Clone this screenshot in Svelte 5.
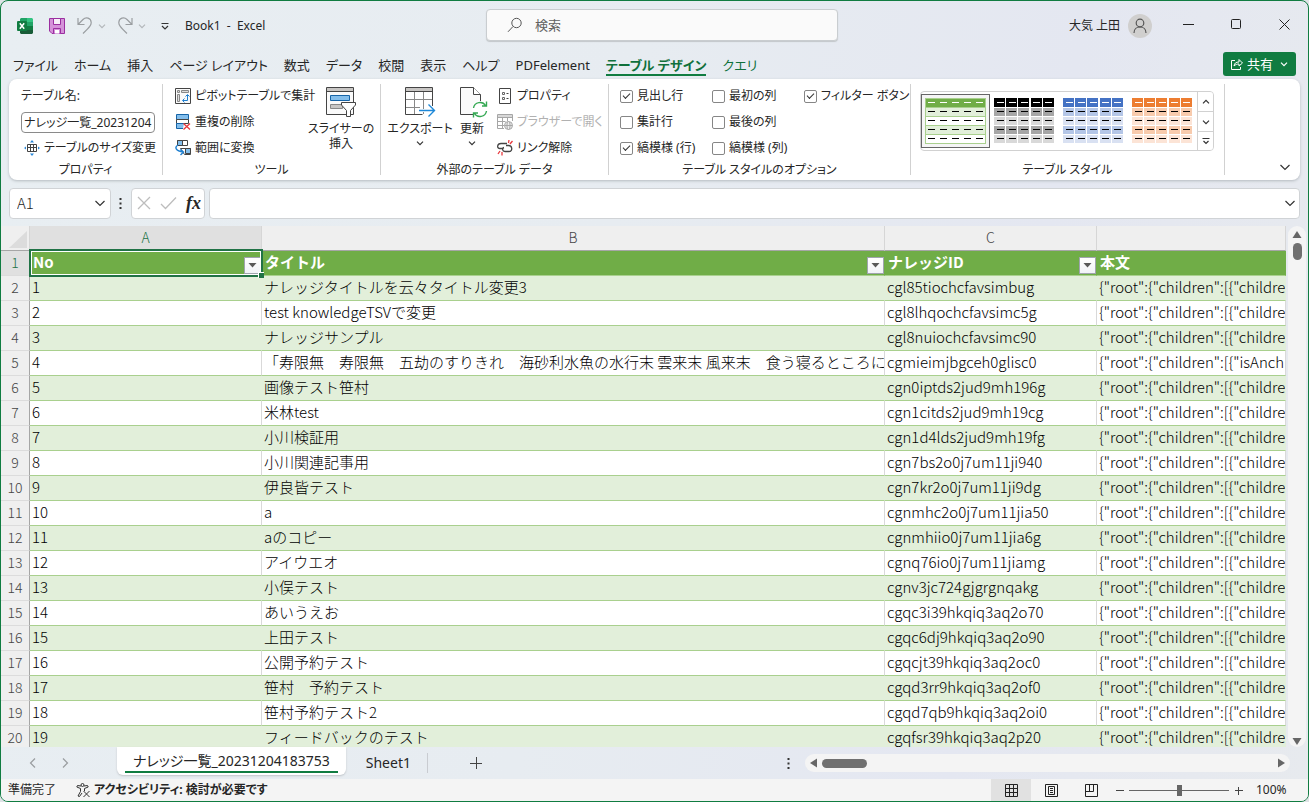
<script lang="ts">
	type Row = { title: string; id: string; body: string };

	const children = '{"root":{"children":[{"childre';
	const anchor = '{"root":{"children":[{"isAnch';

	const menu = [
		'ファイル',
		'ホーム',
		'挿入',
		'ページ レイアウト',
		'数式',
		'データ',
		'校閲',
		'表示',
		'ヘルプ',
		'PDFelement',
		'テーブル デザイン',
		'クエリ'
	];

	const rows: Row[] = [
		{ title: 'ナレッジタイトルを云々タイトル変更3', id: 'cgl85tiochcfavsimbug', body: children },
		{ title: 'test knowledgeTSVで変更', id: 'cgl8lhqochcfavsimc5g', body: children },
		{ title: 'ナレッジサンプル', id: 'cgl8nuiochcfavsimc90', body: children },
		{
			title: '「寿限無　寿限無　五劫のすりきれ　海砂利水魚の水行末 雲来末 風来末　食う寝るところに',
			id: 'cgmieimjbgceh0glisc0',
			body: anchor
		},
		{ title: '画像テスト笹村', id: 'cgn0iptds2jud9mh196g', body: children },
		{ title: '米林test', id: 'cgn1citds2jud9mh19cg', body: children },
		{ title: '小川検証用', id: 'cgn1d4lds2jud9mh19fg', body: children },
		{ title: '小川関連記事用', id: 'cgn7bs2o0j7um11ji940', body: children },
		{ title: '伊良皆テスト', id: 'cgn7kr2o0j7um11ji9dg', body: children },
		{ title: 'a', id: 'cgnmhc2o0j7um11jia50', body: children },
		{ title: 'aのコピー', id: 'cgnmhiio0j7um11jia6g', body: children },
		{ title: 'アイウエオ', id: 'cgnq76io0j7um11jiamg', body: children },
		{ title: '小俣テスト', id: 'cgnv3jc724gjgrgnqakg', body: children },
		{ title: 'あいうえお', id: 'cgqc3i39hkqiq3aq2o70', body: children },
		{ title: '上田テスト', id: 'cgqc6dj9hkqiq3aq2o90', body: children },
		{ title: '公開予約テスト', id: 'cgqcjt39hkqiq3aq2oc0', body: children },
		{ title: '笹村　予約テスト', id: 'cgqd3rr9hkqiq3aq2of0', body: children },
		{ title: '笹村予約テスト2', id: 'cgqd7qb9hkqiq3aq2oi0', body: children },
		{ title: 'フィードバックのテスト', id: 'cgqfsr39hkqiq3aq2p20', body: children }
	];

	const themes = [
		{ head: '#70ad47', odd: '#e2efda', even: '#ffffff', line: '#a9d08e' },
		{ head: '#000000', odd: '#a6a6a6', even: '#d9d9d9', line: '' },
		{ head: '#4472c4', odd: '#b4c6e7', even: '#d9e1f2', line: '' },
		{ head: '#ed7d31', odd: '#f8cbad', even: '#fce4d6', line: '' }
	];

	let activeMenu = $state('テーブル デザイン');
	let activeTheme = $state(0);
	let tableName = $state('ナレッジ一覧_20231204183753');
	let cellRef = $state('A1');
	let formula = $state('');
	let search = $state('');
	let zoom = $state(100);

	let options = $state([
		{ label: '見出し行', checked: true },
		{ label: '最初の列', checked: false },
		{ label: 'フィルター ボタン', checked: true },
		{ label: '集計行', checked: false },
		{ label: '最後の列', checked: false },
		{ label: '', checked: false },
		{ label: '縞模様 (行)', checked: true },
		{ label: '縞模様 (列)', checked: false }
	]);
</script>

{#snippet chevron(size: number)}
	<svg class="chevron" width={size} height={size} viewBox="0 0 12 12">
		<path d="M1.5 4 6 8.5 10.5 4" />
	</svg>
{/snippet}

{#snippet filterButton(name: string)}
	<button class="filter" aria-label="{name} フィルター">
		<svg width="9" height="5" viewBox="0 0 9 5"><path d="M0.5 0h8L4.5 4.5z" fill="#595959" /></svg>
	</button>
{/snippet}

<div class="window">
	<header class="titlebar">
		<div class="quick">
			<svg class="logo" width="16" height="16" viewBox="0 0 16 16">
				<path d="M4 0h6v4H3V1z" fill="#21a366" />
				<path d="M10 0h5l1 1v3h-6z" fill="#33c481" />
				<path d="M3 4h7v4H3z" fill="#107c41" />
				<path d="M10 4h6v4h-6z" fill="#21a366" />
				<path d="M3 8h7v4H3z" fill="#185c37" />
				<path d="M10 8h6v4h-6z" fill="#107c41" />
				<path d="M3 12h13v3l-1 1H4l-1-1z" fill="#185c37" />
				<rect y="3" width="10" height="10" rx="1" fill="#107c41" />
				<path d="m2.8 5.2 4.4 5.6M7.2 5.2l-4.4 5.6" stroke="#fff" stroke-width="1.5" />
			</svg>
			<button class="plain" aria-label="上書き保存">
				<svg width="16" height="16" viewBox="0 0 16 16">
					<path d="M.5.5h15v15H3L.5 13z" fill="#d592d9" stroke="#9b2fa0" />
					<path d="M4.5.5h7v6h-7z" fill="#f7f0f8" stroke="#9b2fa0" />
					<path d="M4.5 15.5v-5h7v5" fill="#d592d9" stroke="#9b2fa0" />
					<path d="M6 12h4v3.5H6z" fill="#fff" />
				</svg>
			</button>
			<div class="history">
				<button class="plain" aria-label="元に戻す">
					<svg width="16" height="18" viewBox="0 0 16 18">
						<path class="faded" d="M1 1v6.500h6.500M1.500 7 6 2.500C9-.5 14 1 14.200 5.500 14.300 8 13 9.500 6 16.500" />
					</svg>
				</button>
				<span class="mini faint">{@render chevron(8)}</span>
			</div>
			<div class="history">
				<button class="plain" aria-label="やり直し">
					<svg width="16" height="18" viewBox="0 0 16 18">
						<path class="faded" d="M15 1v6.500H8.500M14.500 7 10 2.500C7-.5 2 1 1.800 5.500 1.700 8 3 9.500 10 16.500" />
					</svg>
				</button>
				<span class="mini faint">{@render chevron(8)}</span>
			</div>
			<button class="plain" aria-label="クイック アクセス ツール バーのカスタマイズ">
				<svg width="8" height="7" viewBox="0 0 8 7">
					<path d="M.5.5h7M1 3l3 3 3-3" fill="none" stroke="#333" stroke-width="1.2" />
				</svg>
			</button>
			<span class="book">Book1&nbsp; -&nbsp; Excel</span>
		</div>
		<label class="search">
			<svg width="16" height="16" viewBox="0 0 16 16">
				<circle cx="9.500" cy="6" r="4.700" />
				<path d="M6 9.500 1 14.800" />
			</svg>
			<input type="text" placeholder="検索" aria-label="検索" bind:value={search} />
		</label>
		<div class="account">
			<span>大気 上田</span>
			<svg class="avatar" width="24" height="24" viewBox="0 0 24 24">
				<circle cx="12" cy="12" r="12" fill="#d0cfce" />
				<circle cx="12" cy="9" r="3.800" fill="none" stroke="#555" stroke-width="1.2" />
				<path d="M6 19c0-8 12-8 12 0" fill="none" stroke="#555" stroke-width="1.2" />
			</svg>
			<button class="caption" aria-label="最小化">
				<svg width="11" height="11" viewBox="0 0 11 11"><path d="M0 5.500h11" /></svg>
			</button>
			<button class="caption" aria-label="最大化">
				<svg width="11" height="11" viewBox="0 0 11 11">
					<rect x=".5" y=".5" width="9" height="9" rx="1" />
				</svg>
			</button>
			<button class="caption" aria-label="閉じる">
				<svg width="11" height="11" viewBox="0 0 11 11"><path d="m.5.5 10 10M10.500.5l-10 10" /></svg>
			</button>
		</div>
	</header>

	<nav class="menu">
		{#each menu as item}
			<button
				class="menu-item"
				class:active={item === activeMenu}
				class:context={item === 'クエリ'}
				onclick={() => (activeMenu = item)}>{item}</button
			>
		{/each}
		<button class="share">
			<svg width="12" height="12" viewBox="0 0 12 12">
				<path d="M4 2.500H.5v9h9V9M3 8c.5-3 2-4 5-4V1.500L11.500 5 8 8V6C6 6 4.500 6.500 3 8z" />
			</svg>
			共有
			{@render chevron(8)}
		</button>
	</nav>

	<section class="ribbon">
		<div class="group properties">
			<div class="rows">
				<label class="field-label" for="table-name">テーブル名:</label>
				<input id="table-name" type="text" bind:value={tableName} />
				<button class="tool resize">
					<svg width="16" height="16" viewBox="0 0 16 16">
						<path d="M3.500 4.500h9v7h-9zM3.500 7.500h9M6.500 4.500v7M9.500 4.500v7" fill="none" stroke="#444" />
						<path d="M8 0l2 2.500H6zM8 16l2-2.500H6zM0 8l2-1.500v3zM16 8l-2-1.500v3z" fill="#2b88d8" />
					</svg>
					テーブルのサイズ変更
				</button>
			</div>
			<h2>プロパティ</h2>
		</div>

		<div class="group tools">
			<div class="body">
				<div class="rows">
					<button class="tool">
						<svg width="16" height="16" viewBox="0 0 16 16">
							<path d="M.5.5h15v15H.5z" fill="#fafafa" stroke="#444" />
							<path d="M2.500 2.500h2v2h-2zM6.500 2.500h7v2h-7zM2.500 6.500h2v7h-2z" fill="#ddd" stroke="#888" />
							<path d="M12.500 7v5.500H8M10.500 8.500l2-2 2 2M9.500 10.500l-2 2 2 2" fill="none" stroke="#1e7fd0" />
						</svg>
						ピボットテーブルで集計
					</button>
					<button class="tool">
						<svg width="16" height="16" viewBox="0 0 16 16">
							<path d="M1.500.5h12v5h-12z" fill="#83beec" stroke="#1664a7" />
							<path d="M1.500 5.500h12v4h-12z" fill="#fff" stroke="#444" />
							<path d="M9 9.500H1.500v5H8" fill="#83beec" stroke="#1664a7" />
							<path d="m8.500 9.500 6.500 6M15 9.500l-6.500 6" stroke="#e8383d" stroke-width="1.300" />
						</svg>
						重複の削除
					</button>
					<button class="tool">
						<svg width="16" height="16" viewBox="0 0 16 16">
							<path d="M2.500.5h10v5h-10z" fill="#fff" stroke="#444" />
							<path d="M2.500.5h5v5h-5z" fill="#83beec" stroke="#444" />
							<path d="M5.500 8.500h10v6h-6z" fill="#fff" stroke="#444" />
							<path d="M10.500 8.500h5v5h-5z" fill="#83beec" stroke="#444" />
							<path d="M3 5C-.5 7 0 11 8.500 12M5.500 9.500l3 2.500-3 3" fill="none" stroke="#1e7fd0" stroke-width="1.400" />
						</svg>
						範囲に変換
					</button>
				</div>
				<button class="big">
					<svg width="32" height="32" viewBox="0 0 32 32">
						<path d="M1.500 1.500h27v27h-27z" fill="#fafafa" stroke="#444" />
						<path d="M2 2h26v3.500H2z" fill="#c8c6c4" />
						<path d="M1.500 5.500h27" stroke="#444" />
						<path d="M5.500 9.500h19v5h-19z" fill="#83beec" stroke="#1664a7" />
						<path d="M5.500 18.500h12v4h-12z" fill="#c8c6c4" stroke="#888" />
						<path d="M16.500 16.500h14v2.500l-5 5.500v6h-4v-6l-5-5.500z" fill="#fff" stroke="#444" />
					</svg>
					<span>スライサーの<br />挿入</span>
				</button>
			</div>
			<h2>ツール</h2>
		</div>

		<div class="group external">
			<div class="body">
				<button class="big">
					<svg width="32" height="32" viewBox="0 0 32 32">
						<path d="M1.500 1.500h27v27h-27z" fill="#fff" />
						<path d="M2 2h26v3.500H2z" fill="#c8c6c4" />
						<path d="M2 13.500h26M2 21.500h14M10.500 6v22M19.500 6v22" fill="none" stroke="#888" />
						<path d="M28.500 20V1.500h-27v27h17M1.500 5.500h27" fill="none" stroke="#444" />
						<path d="M15 24.500h15.500M24.500 18.500l6 6-6 6" fill="none" stroke="#fff" stroke-width="3" />
						<path d="M15 24.500h15.500M24.500 18.500l6 6-6 6" fill="none" stroke="#1e88d8" stroke-width="1.400" />
					</svg>
					<span>エクスポート</span>
					{@render chevron(8)}
				</button>
				<button class="big refresh">
					<svg width="32" height="32" viewBox="0 0 32 32">
						<path d="M4.500 1.500h13l7 7v20h-20z" fill="#fafafa" stroke="#444" />
						<path d="M17.500 1.500v7h7" fill="#fff" stroke="#444" />
						<circle cx="24" cy="23.500" r="8.500" fill="#fff" />
						<path d="M17.500 22c1-6 9-7.500 12-2.500M30.500 15.500v4.500H26M30.500 25c-1 6-9 7.500-12 2.500M17.500 31.500V27H22" fill="none" stroke="#35a853" stroke-width="1.400" />
					</svg>
					<span>更新</span>
					{@render chevron(8)}
				</button>
				<div class="rows">
					<button class="tool">
						<svg width="16" height="16" viewBox="0 0 16 16">
							<path d="M2.500.5h11v15h-11z" fill="#fff" stroke="#444" />
							<path d="M5.500 4.500h2v2h-2zM5.500 9.500h2v2h-2z" fill="none" stroke="#666" />
							<path d="M9.500 5.500h2M9.500 10.500h2" stroke="#444" />
						</svg>
						プロパティ
					</button>
					<button class="tool" disabled>
						<svg width="16" height="16" viewBox="0 0 16 16" fill="none" stroke="#a6a6a6">
							<path d="M7 14.500H.5V.5h15V7M.5 3.500h15M.5 7.500h8M.5 11.500H7M5.500 3.500v11M10.500 3.500V7" />
							<path d="M1 1h14v2H1z" fill="#d8d8d8" stroke="none" />
							<circle cx="11.500" cy="11.500" r="4" fill="#eee" />
							<ellipse cx="11.500" cy="11.500" rx="1.600" ry="4" />
							<path d="M7.500 11.500h8" />
						</svg>
						ブラウザーで開く
					</button>
					<button class="tool">
						<svg width="16" height="16" viewBox="0 0 16 16" fill="none">
							<path d="M10 3.500H4C0 3.500-.5 8.500 3 8.500h3M9 5.500h2.500c4 0 4.500 6 .5 6H8C5 11.500 5 8 7 7.500" stroke="#444" stroke-width="1.300" />
							<path d="M11.500 3 12 0M13 4l2.500-3M1 14l2-3M5 15.500V12" stroke="#e8383d" stroke-width="1.300" />
						</svg>
						リンク解除
					</button>
				</div>
			</div>
			<h2>外部のテーブル データ</h2>
		</div>

		<div class="group options">
			<div class="checks">
				{#each options as option}
					{#if option.label}
						<label><input type="checkbox" bind:checked={option.checked} />{option.label}</label>
					{:else}
						<span></span>
					{/if}
				{/each}
			</div>
			<h2>テーブル スタイルのオプション</h2>
		</div>

		<div class="group styles">
			<div class="gallery">
				{#each themes as theme, i}
					<button
						class="thumb"
						class:selected={i === activeTheme}
						aria-label="テーブル スタイル {i + 1}"
						onclick={() => (activeTheme = i)}
					>
						<svg width="61" height="46" viewBox="0 0 61 46">
							{#if theme.line}
								<rect width="61" height="46" fill={theme.line} />
							{/if}
							{#each [0, 1, 2, 3, 4] as r}
								{@const fill = r === 0 ? theme.head : r % 2 ? theme.odd : theme.even}
								{#if theme.line}
									<rect x="1" y={r * 9 + 1} width="59" height="8" {fill} />
								{/if}
								{#each [0, 1, 2, 3, 4] as c}
									{#if !theme.line}
										<rect x={c * 12 + (c > 2 ? 1 : 0)} y={r * 9 + (r ? 1 : 0)} width="11" height={r ? 8 : 9} {fill} />
									{/if}
									<rect x={c * 12 + 3} y={r * 9 + 4} width="7" height="1" fill={r ? '#000' : '#fff'} />
								{/each}
							{/each}
						</svg>
					</button>
				{/each}
				<div class="scroller">
					<button aria-label="上へ"><span class="flip">{@render chevron(8)}</span></button>
					<button aria-label="下へ">{@render chevron(8)}</button>
					<button aria-label="その他">
						<svg class="chevron" width="8" height="8" viewBox="0 0 8 8"><path d="M.5 1.500h7M1.500 4 4 6.500 6.500 4" /></svg>
					</button>
				</div>
			</div>
			<h2>テーブル スタイル</h2>
		</div>
		<button class="plain collapse" aria-label="リボンを折りたたむ">{@render chevron(12)}</button>
	</section>

	<div class="formula">
		<div class="name-box">
			<input type="text" aria-label="名前ボックス" bind:value={cellRef} />
			<button class="plain" aria-label="名前の一覧">{@render chevron(12)}</button>
		</div>
		<svg class="dots" width="3" height="11" viewBox="0 0 3 11">
			<path d="M.5 0h2v2h-2zM.5 4.500h2v2h-2zM.5 9h2v2h-2z" fill="#333" />
		</svg>
		<div class="fx-box">
			<button class="plain" aria-label="キャンセル">
				<svg width="14" height="14" viewBox="0 0 14 14"><path class="off" d="m1 1 12 12M13 1 1 13" /></svg>
			</button>
			<button class="plain" aria-label="入力">
				<svg width="17" height="14" viewBox="0 0 17 14"><path class="off" d="m1 8 4.500 4.500L16 1.500" /></svg>
			</button>
			<button class="plain fx" aria-label="関数の挿入">fx</button>
		</div>
		<div class="formula-box">
			<input type="text" aria-label="数式バー" bind:value={formula} />
			<button class="plain" aria-label="数式バーの展開">{@render chevron(12)}</button>
		</div>
	</div>

	<main class="work">
		<div class="sheet">
			<table>
				<colgroup>
					<col class="c-num" />
					<col class="c-a" />
					<col class="c-b" />
					<col class="c-c" />
					<col />
				</colgroup>
				<thead>
					<tr>
						<th class="corner" aria-label="すべて選択">
							<svg width="18" height="17" viewBox="0 0 18 17"><path d="M18 0v17H0z" fill="#dcdcdc" /></svg>
						</th>
						<th class="current">A</th>
						<th>B</th>
						<th>C</th>
						<th></th>
					</tr>
				</thead>
				<tbody>
					<tr class="heading">
						<th class="current">1</th>
						<td class="cursor">No{@render filterButton('No')}</td>
						<td>タイトル{@render filterButton('タイトル')}</td>
						<td>ナレッジID{@render filterButton('ナレッジID')}</td>
						<td>本文</td>
					</tr>
					{#each rows as row, i}
						<tr class:band={i % 2 === 0}>
							<th>{i + 2}</th>
							<td>{i + 1}</td>
							<td>{row.title}</td>
							<td>{row.id}</td>
							<td>{row.body}</td>
						</tr>
					{/each}
				</tbody>
			</table>
		</div>
		<div class="vscroll">
			<svg width="10" height="7" viewBox="0 0 10 7"><path d="M5 0l4.500 7h-9z" /></svg>
			<span class="thumb-v"></span>
			<svg class="down" width="10" height="7" viewBox="0 0 10 7"><path d="M5 7 .5 0h9z" /></svg>
		</div>
	</main>

	<div class="tabs">
		<div class="tab-nav">
			<button class="plain left" aria-label="前のシート">{@render chevron(12)}</button>
			<button class="plain right" aria-label="次のシート">{@render chevron(12)}</button>
		</div>
		<button class="tab active"><span>ナレッジ一覧_20231204183753</span></button>
		<button class="tab">Sheet1</button>
		<button class="plain add" aria-label="新しいシート">
			<svg width="12" height="12" viewBox="0 0 12 12"><path d="M0 6.500h12M6.500 0v12" stroke="#444" /></svg>
		</button>
		<svg class="dots" width="3" height="11" viewBox="0 0 3 11">
			<path d="M.5 0h2v2h-2zM.5 4.500h2v2h-2zM.5 9h2v2h-2z" fill="#333" />
		</svg>
		<div class="hscroll">
			<svg width="7" height="10" viewBox="0 0 7 10"><path d="M0 5 7 .5v9z" /></svg>
			<span class="thumb-h"></span>
			<svg class="end" width="7" height="10" viewBox="0 0 7 10"><path d="M7 5 0 .5v9z" /></svg>
		</div>
	</div>

	<footer class="status">
		<span>準備完了</span>
		<button class="plain access">
			<svg width="14" height="14" viewBox="0 0 14 14" fill="none" stroke="#333">
				<circle cx="6.500" cy="2" r="1.500" />
				<path d="M5 3 1.500 2.500.8 4 4.500 5.500v3L2 13l1.500.5L6 10M8 3l3.500-.5.7 1.500L8.500 5.500V8M7.500 8l6 6M13.500 8l-6 6" />
			</svg>
			アクセシビリティ: 検討が必要です
		</button>
		<div class="views">
			<button class="on" aria-label="標準">
				<svg width="13" height="13" viewBox="0 0 13 13">
					<path d="M.5.5h12v12H.5zM.5 4.500h12M.5 8.500h12M4.500.5v12M8.500.5v12" />
				</svg>
			</button>
			<button aria-label="ページ レイアウト">
				<svg width="13" height="13" viewBox="0 0 13 13">
					<path d="M.5.5h12v12H.5zM3.500 2.500h6v8h-6zM5 4.500h3M5 6.500h3M5 8.500h3" />
				</svg>
			</button>
			<button aria-label="改ページ プレビュー">
				<svg width="13" height="13" viewBox="0 0 13 13">
					<path d="M.5.5h12v12H.5zM4.500.5v7M8.500.5v7M.5 7.500h8" />
				</svg>
			</button>
		</div>
		<div class="zoom">
			<button class="plain" aria-label="縮小" onclick={() => (zoom -= 10)}>
				<svg width="9" height="9" viewBox="0 0 9 9"><path d="M1 4.500h8" stroke="#444" /></svg>
			</button>
			<input type="range" min="0" max="200" aria-label="ズーム" bind:value={zoom} />
			<button class="plain" aria-label="拡大" onclick={() => (zoom += 10)}>
				<svg width="9" height="9" viewBox="0 0 9 9"><path d="M1 4.500h8M4.500 1v8" stroke="#444" /></svg>
			</button>
			<span>{zoom}%</span>
		</div>
	</footer>
</div>

<style>
	:global(body) {
		margin: 0;
		background: #dfe3e6;
	}

	.window {
		display: flex;
		flex-direction: column;
		box-sizing: border-box;
		height: 100vh;
		overflow: hidden;
		border: 1px solid #107c41;
		border-radius: 8px;
		background: linear-gradient(100deg, #e8eef2 0%, #e7ecf1 45%, #e4e7f1 75%, #e7eaee 100%);
		color: #262626;
		font: 13px/18px 'Noto Sans', 'Noto Sans CJK JP', sans-serif;
		font-feature-settings: 'palt';
	}

	button,
	input {
		padding: 0;
		border: 0;
		background: none;
		color: inherit;
		font: inherit;
		font-feature-settings: inherit;
	}

	input {
		min-width: 0;
		outline: none;
	}

	svg {
		flex: none;
	}

	.plain {
		display: flex;
		align-items: center;
		justify-content: center;
	}

	.chevron {
		fill: none;
		stroke: #333;
		stroke-width: 1.2;
	}

	.chevron path {
		vector-effect: non-scaling-stroke;
	}

	/* title bar */
	.titlebar {
		display: grid;
		grid-template-columns: 1fr 352px 1fr;
		align-items: center;
		height: 48px;
		padding-left: 15px;
		font-size: 12px;
	}

	.quick,
	.history {
		display: flex;
		align-items: center;
	}

	.quick {
		gap: 16px;
		padding: 2px 0 0 1px;
	}

	.history {
		gap: 5px;
		margin: 0 -1px 0 -4px;
	}

	.mini {
		display: flex;
	}

	.faint .chevron {
		stroke: #b3b7ba;
	}

	.faded {
		fill: none;
		stroke: #9a9ea1;
		stroke-width: 1.2;
	}

	.book {
		white-space: nowrap;
	}

	.search {
		display: flex;
		align-items: center;
		gap: 12px;
		height: 30px;
		padding-left: 20px;
		border: 1px solid #c9cdd0;
		border-radius: 4px;
		background: #fafafa;
		box-shadow: 0 1px 1px #c3c7ca;
	}

	.search svg {
		fill: none;
		stroke: #555;
	}

	.search input {
		flex: 1;
		font-size: 13px;
	}

	.search input::placeholder {
		color: #616161;
	}

	.account {
		display: flex;
		align-items: center;
		justify-content: flex-end;
		padding-top: 2px;
		white-space: nowrap;
	}

	.avatar {
		margin: 0 12px 0 8px;
	}

	.caption {
		width: 48px;
		height: 32px;
	}

	.caption svg {
		fill: none;
		stroke: #222;
	}

	/* ribbon tabs */
	.menu {
		display: flex;
		align-items: center;
		gap: 16px;
		height: 30px;
		padding: 0 12px;
	}

	.menu-item {
		padding: 4px 0 0;
		border-bottom: 2px solid transparent;
		white-space: nowrap;
	}

	.menu-item.active {
		border-color: #107c41;
		color: #0f703b;
		font-weight: 700;
	}

	.menu-item.context {
		color: #0f703b;
	}

	.share {
		display: flex;
		align-items: center;
		gap: 4px;
		height: 24px;
		margin-left: auto;
		padding: 0 8px;
		border-radius: 3px;
		background: #107c41;
		color: #fff;
	}

	.share svg {
		fill: none;
		stroke: #fff;
	}

	.share .chevron {
		margin-left: 3px;
	}

	/* ribbon */
	.ribbon {
		display: flex;
		margin: 0 8px;
		padding: 5px 0;
		border-radius: 8px;
		background: #fff;
		box-shadow: 0 1px 3px #b4babf;
		font-size: 12px;
	}

	.group {
		display: flex;
		flex-direction: column;
		box-sizing: border-box;
		height: 91px;
		border-right: 1px solid #d1d1d1;
	}

	.properties {
		width: 154px;
	}

	.tools {
		width: 218px;
	}

	.external {
		width: 228px;
	}

	.options {
		width: 302px;
	}

	.styles {
		width: 314px;
	}

	h2 {
		margin: auto 0 0;
		font-size: 12px;
		font-weight: 400;
		line-height: 11px;
		text-align: center;
	}

	.body {
		display: flex;
	}

	.rows {
		display: grid;
		grid-auto-rows: 26px;
		align-items: center;
		height: 76px;
		align-content: center;
	}

	.properties .rows {
		padding: 0 8px 0 12px;
	}

	#table-name {
		box-sizing: border-box;
		width: 134px;
		height: 21px;
		padding: 0 2px;
		border: 1px solid #8a8a8a;
		border-radius: 4px;
	}

	.tool {
		display: flex;
		align-items: center;
		gap: 4px;
		white-space: nowrap;
	}

	.resize {
		padding-left: 3px;
	}

	.tool:disabled {
		color: #b1b1b1;
	}

	.tools .rows {
		flex: 1;
		min-width: 0;
		padding-left: 12px;
	}

	.big {
		display: flex;
		flex: none;
		flex-direction: column;
		align-items: center;
		width: 78px;
		height: 76px;
		padding-top: 2px;
		line-height: 15px;
		white-space: nowrap;
	}

	.big svg:first-child {
		margin-bottom: 3px;
	}

	.big .chevron {
		margin-top: 3px;
	}

	.refresh {
		width: 34px;
		padding-right: 8px;
	}

	.external .rows {
		padding-left: 4px;
	}

	.checks {
		display: grid;
		grid-template-columns: 92px 92px 1fr;
		grid-auto-rows: 26px;
		align-content: center;
		align-items: center;
		height: 76px;
		padding-left: 11px;
	}

	.checks label {
		display: flex;
		align-items: center;
		gap: 4px;
		white-space: nowrap;
	}

	.checks input {
		display: grid;
		place-items: center;
		box-sizing: border-box;
		width: 13px;
		height: 13px;
		margin: 0;
		border: 1px solid #868686;
		border-radius: 2px;
		appearance: none;
	}

	.checks input:checked::before {
		width: 6px;
		height: 3px;
		margin-bottom: 2px;
		border: solid #333;
		border-width: 0 0 1px 1px;
		content: '';
		transform: rotate(-45deg);
	}

	.gallery {
		display: flex;
		align-items: center;
		align-self: flex-start;
		margin: 7px 0 0 9px;
		border: 1px solid #d1d1d1;
		border-radius: 4px;
	}

	.thumb {
		display: flex;
		align-items: center;
		justify-content: center;
		width: 69px;
		height: 54px;
		box-sizing: border-box;
	}

	.thumb.selected {
		border: 1px solid #666;
		background: #f5f5f5;
	}

	.scroller {
		display: grid;
		grid-template-rows: 19px 19px 18px;
		gap: 1px;
		width: 15px;
		border-left: 1px solid #d1d1d1;
		background: #d1d1d1;
		border-radius: 0 3px 3px 0;
	}

	.scroller button {
		display: flex;
		align-items: center;
		justify-content: center;
		background: #fff;
	}

	.scroller button:first-child {
		border-top-right-radius: 3px;
	}

	.scroller button:last-child {
		border-bottom-right-radius: 3px;
	}

	.flip {
		display: flex;
		rotate: 180deg;
	}

	.collapse {
		align-self: flex-end;
		margin: 0 9px 2px auto;
	}

	/* formula bar */
	.formula {
		display: flex;
		align-items: center;
		height: 46px;
		padding: 0 8px;
	}

	.name-box,
	.fx-box,
	.formula-box {
		display: flex;
		align-items: center;
		box-sizing: border-box;
		height: 31px;
		border: 1px solid #d0d3d6;
		border-radius: 4px;
		background: #fff;
	}

	.name-box {
		width: 102px;
		padding: 0 4px 0 7px;
		font: 300 15px/20px 'Noto Sans CJK JP', sans-serif;
	}

	.name-box input,
	.formula-box input {
		flex: 1;
	}

	.formula .dots {
		margin: 0 9px 0 8px;
	}

	.fx-box {
		gap: 9px;
		width: 74px;
		padding: 0 5px;
	}

	.off {
		fill: none;
		stroke: #bdbdbd;
		stroke-width: 1.3;
	}

	.fx {
		font: italic 700 18px/24px 'Liberation Serif', serif;
	}

	.formula-box {
		flex: 1;
		margin-left: 4px;
		padding: 0 3px 0 8px;
	}

	/* sheet */
	.work {
		display: flex;
		flex: 1;
		min-height: 0;
	}

	.sheet {
		flex: 1;
		min-width: 0;
		overflow: hidden;
		background: #fff;
		font-family: 'Noto Sans CJK JP', sans-serif;
		font-feature-settings: normal;
		font-weight: 300;
	}

	table {
		width: 100%;
		border-collapse: separate;
		border-spacing: 0;
		table-layout: fixed;
		font-size: 15px;
		line-height: 22px;
	}

	.c-num {
		width: 29px;
	}

	.c-a {
		width: 232px;
	}

	.c-b {
		width: 623px;
	}

	.c-c {
		width: 212px;
	}

	th,
	td {
		box-sizing: border-box;
		height: 25px;
		padding: 0 0 2px;
		overflow: hidden;
		white-space: nowrap;
	}

	th {
		border-right: 1px solid #d6d6d6;
		border-bottom: 1px solid #dcdcdc;
		background: #efefef;
		color: #444;
		font-size: 14px;
		font-weight: inherit;
		text-align: center;
	}

	thead th {
		border-bottom-color: #a6a6a6;
	}

	tbody th {
		border-right-color: #a6a6a6;
	}

	th.current {
		background: #e0e0e0;
		color: #217346;
	}

	.corner svg {
		display: block;
		margin: 4px 0 0 8px;
	}

	td {
		padding-left: 2px;
		border-right: 1px solid #d9d9d9;
		border-bottom: 1px solid #a9d08e;
		color: #000;
	}

	.band td {
		border-right-color: #e2efda;
		background: #e2efda;
	}

	.heading td {
		position: relative;
		padding-left: 3px;
		border-right-color: #70ad47;
		background: #70ad47;
		color: #fff;
		font-weight: 700;
	}

	.heading .cursor {
		overflow: visible;
	}

	.cursor::before {
		position: absolute;
		z-index: 1;
		inset: -2px -2px -2px -1px;
		border: 2px solid #217346;
		box-shadow: inset 0 0 0 1px #fff;
		content: '';
		pointer-events: none;
	}

	.cursor::after {
		position: absolute;
		z-index: 2;
		right: -3px;
		bottom: -3px;
		width: 5px;
		height: 5px;
		border: solid #fff;
		border-width: 1px 0 0 1px;
		background: #217346;
		content: '';
	}

	.filter {
		position: absolute;
		right: 0;
		bottom: 1px;
		display: flex;
		align-items: center;
		justify-content: center;
		box-sizing: border-box;
		width: 17px;
		height: 17px;
		border: 1px solid #a0a4ae;
		background: linear-gradient(#fff, #f1f3f7);
	}

	.vscroll,
	.hscroll {
		display: flex;
		align-items: center;
		border-radius: 9px;
		background: #f4f4f4;
		fill: #666;
	}

	.vscroll {
		flex-direction: column;
		gap: 5px;
		box-sizing: border-box;
		width: 18px;
		margin: 0 2px;
		padding: 5px 0 2px;
	}

	.thumb-v,
	.thumb-h {
		border-radius: 5px;
		background: #707070;
	}

	.thumb-v {
		width: 9px;
		height: 17px;
	}

	.down {
		margin-top: auto;
	}

	/* sheet tabs */
	.tabs {
		display: flex;
		align-items: center;
		height: 32px;
		font-size: 14px;
	}

	.tab-nav {
		display: flex;
		gap: 20px;
		width: 90px;
		padding-left: 26px;
	}

	.tab-nav .chevron {
		stroke: #9a9da0;
	}

	.left {
		rotate: 90deg;
	}

	.right {
		rotate: -90deg;
	}

	.tab {
		height: 20px;
		padding: 0 16px;
		border-right: 1px solid #c9ccd1;
	}

	.tab.active {
		align-self: flex-start;
		height: 28px;
		margin-right: 4px;
		padding: 0 8px 2px;
		border: 0;
		border-radius: 0 0 6px 6px;
		background: #fff;
		box-shadow: 0 1px 2px #c0c4c9;
	}

	.tab.active span {
		display: block;
		padding: 4px 8px 1px;
		border-bottom: 2px solid #107c41;
	}

	.add {
		margin-left: 42px;
	}

	.tabs .dots {
		margin-left: auto;
	}

	.hscroll {
		box-sizing: border-box;
		gap: 5px;
		width: 485px;
		height: 18px;
		margin: 0 18px 0 15px;
		padding: 0 5px;
	}

	.thumb-h {
		width: 45px;
		height: 9px;
	}

	.end {
		margin-left: auto;
	}

	/* status bar */
	.status {
		display: flex;
		align-items: center;
		gap: 20px;
		height: 22px;
		padding-left: 7px;
		background: #f4f4f4;
		font-size: 12px;
		white-space: nowrap;
	}

	.access {
		gap: 4px;
		font-weight: 700;
	}

	.views {
		display: flex;
		align-self: stretch;
		margin-left: auto;
	}

	.views button {
		display: flex;
		align-items: center;
		justify-content: center;
		width: 40px;
	}

	.views .on {
		background: #e1e1e1;
	}

	.views svg {
		fill: none;
		stroke: #222;
	}

	.zoom {
		display: flex;
		align-items: center;
		gap: 5px;
		width: 193px;
		margin-left: -16px;
	}

	.zoom input {
		width: 100px;
		height: 12px;
		margin: 0;
		background: linear-gradient(#666, #666) center / 100% 1px no-repeat;
		appearance: none;
	}

	.zoom input::-webkit-slider-thumb {
		width: 5px;
		height: 11px;
		background: #666;
		appearance: none;
	}

	.zoom span {
		margin-left: 8px;
	}
</style>
